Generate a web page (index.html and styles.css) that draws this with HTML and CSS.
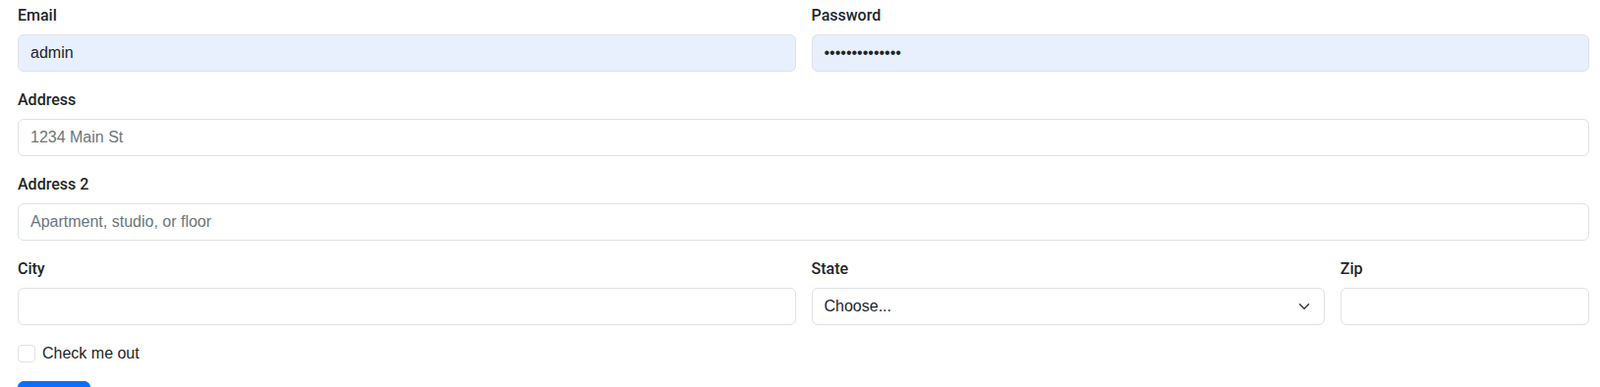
FILE: index.html
```html
<!DOCTYPE html>
<html lang="en">
<head>
  <meta charset="UTF-8" />
  <meta name="viewport" content="width=device-width, initial-scale=1" />
  <title>Address form</title>
  <link rel="stylesheet" href="styles.css">
</head>
<body>

  <form class="form-grid">
    <div class="col-6">
      <label for="email">Email</label>
      <input type="text" id="email" class="field autofill" value="admin" />
    </div>
    <div class="col-6">
      <label for="password">Password</label>
      <input type="password" id="password" class="field autofill" value="adminpassword1" />
    </div>
    <div class="col-12">
      <label for="address">Address</label>
      <input type="text" id="address" class="field" placeholder="1234 Main St" />
    </div>
    <div class="col-12">
      <label for="address2">Address 2</label>
      <input type="text" id="address2" class="field" placeholder="Apartment, studio, or floor" />
    </div>
    <div class="col-6">
      <label for="city">City</label>
      <input type="text" id="city" class="field" />
    </div>
    <div class="col-4">
      <label for="state">State</label>
      <div class="select-wrap">
        <select id="state" class="field select">
          <option selected>Choose...</option>
          <option>...</option>
        </select>
        <svg class="chevron" width="16" height="12" viewBox="0 0 16 16" aria-hidden="true">
          <path d="m2 5 6 6 6-6" fill="none" stroke="#343a40" stroke-width="2" stroke-linecap="round" stroke-linejoin="round" />
        </svg>
      </div>
    </div>
    <div class="col-2">
      <label for="zip">Zip</label>
      <input type="text" id="zip" class="field" />
    </div>
    <div class="col-12 check-row">
      <input type="checkbox" id="check" class="check" />
      <label for="check" class="check-label">Check me out</label>
    </div>
    <div class="col-12">
      <button type="submit" class="btn-primary">Sign in</button>
    </div>
  </form>

</body>
</html>
```

FILE: styles.css
```css
body {
  margin: 0;
  font-family: "Liberation Sans", Arial, sans-serif;
  font-size: 16px;
  line-height: 24px;
  color: #212529;
  background: #fff;
}
.form-grid {
  display: grid;
  grid-template-columns: repeat(12, 1fr);
  gap: 16px;
  padding: 3px 11px 0 18px;
}
.col-12 { grid-column: span 12; }
.col-6 { grid-column: span 6; }
.col-4 { grid-column: span 4; }
.col-2 { grid-column: span 2; }
label {
  display: block;
  padding-top: 1px;
  margin-bottom: 7px;
  font-family: Roboto, "Liberation Sans", sans-serif;
  font-weight: 500;
}
.field {
  display: block;
  box-sizing: border-box;
  width: 100%;
  height: 38px;
  margin: 0;
  padding: 6px 12px;
  border: 1px solid #dee2e6;
  border-radius: 6px;
  background: #fff;
  font-family: inherit;
  font-size: 16px;
  line-height: 24px;
  color: #212529;
  outline: none;
}
.field::placeholder {
  color: #6c757d;
}
.autofill {
  background: #e8f0fe;
}
.select-wrap {
  position: relative;
}
.select {
  appearance: none;
  -webkit-appearance: none;
  padding-right: 36px;
}
.chevron {
  position: absolute;
  right: 13px;
  top: 13px;
  pointer-events: none;
}
.check-row {
  display: flex;
  align-items: center;
  height: 24px;
  margin-top: 1px;
}
.check {
  appearance: none;
  -webkit-appearance: none;
  width: 18px;
  height: 18px;
  margin: 0 7px 0 0;
  border: 1px solid #dee2e6;
  border-radius: 4px;
  background: #fff;
}
.check-label {
  padding-top: 0;
  margin: 0;
  font-family: inherit;
  font-weight: 400;
}
.btn-primary {
  margin-top: 0;
  padding: 6px 12px;
  border: 1px solid #0d6efd;
  border-radius: 6px;
  background: #0d6efd;
  color: #fff;
  font-family: inherit;
  font-size: 16px;
  line-height: 24px;
  width: 74px;
}
```
